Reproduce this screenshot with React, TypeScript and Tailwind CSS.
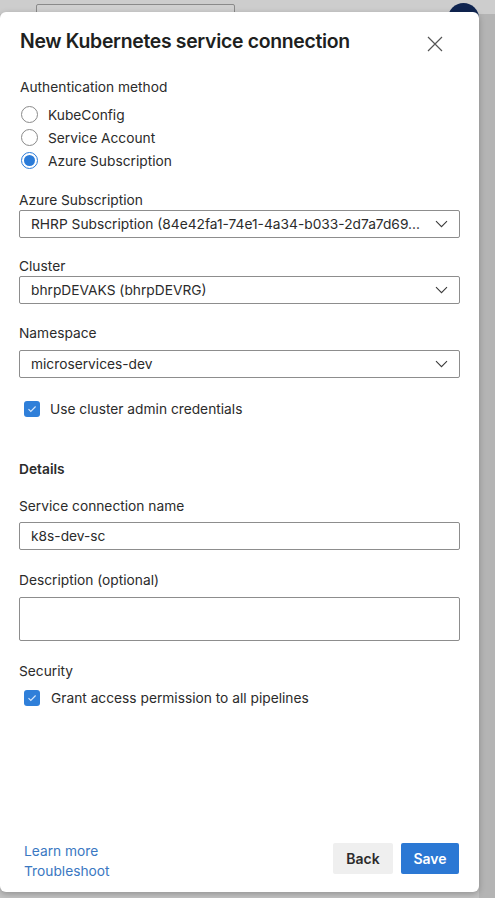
import React from 'react';

const font = { fontFamily: 'Inter, "Liberation Sans", Arial, sans-serif' };

const Chevron = () => (
  <svg width="13" height="8" viewBox="0 0 13 8" fill="none" stroke="#3b3b3b" strokeWidth="1.1">
    <path d="M1 1.2l5.5 5.5L12 1.2" />
  </svg>
);

const Radio = ({ checked, label }: { checked?: boolean; label: string }) => (
  <div className="flex items-center h-[23px]">
    <span
      className={`w-[17px] h-[17px] ml-[21px] rounded-full flex items-center justify-center ${
        checked ? 'border border-[#2b7bd8] bg-white' : 'border border-[#8a8a8a] bg-white'
      }`}
    >
      {checked && <span className="w-[11px] h-[11px] rounded-full bg-[#2b7bd8]" />}
    </span>
    <span className="ml-[10px] text-[13.75px] leading-[20px] text-[#2b2b2b]">{label}</span>
  </div>
);

const Check = () => (
  <span className="w-[16px] h-[16px] rounded-[3px] bg-[#2f7fd9] flex items-center justify-center">
    <svg width="10" height="8" viewBox="0 0 10 8" fill="none" stroke="#d8e8fb" strokeWidth="1.1">
      <path d="M1.5 4.2l2.3 2.3L8.6 1.5" />
    </svg>
  </span>
);

const SelectBox = ({ value, className = '' }: { value: string; className?: string }) => (
  <div className={`mx-[19px] h-[28px] border border-[#8d8d8d] rounded-[2px] flex items-center justify-between pl-[11px] pr-[11px] ${className}`}>
    <span className="text-[13.75px] leading-[20px] text-[#2b2b2b] truncate">{value}</span>
    <Chevron />
  </div>
);

const Label = ({ children, className = '' }: { children: React.ReactNode; className?: string }) => (
  <div className={`px-[19px] text-[13.75px] leading-[20px] text-[#2b2b2b] ${className}`}>{children}</div>
);

export default function App() {
  return (
    <div className="w-[495px] h-[898px] bg-[#c3c3c3] relative overflow-hidden" style={font}>
      {/* page behind the overlay */}
      <div className="absolute left-0 top-0 w-full h-[14px] bg-[#cdcdcd]" />
      <div className="absolute left-[36px] top-[4px] w-[199px] h-[20px] border border-[#8a8a8a] rounded-[2px] bg-[#d0d0d0]" />
      <div className="absolute left-[448px] top-[3px] w-[31px] h-[31px] rounded-full bg-[#0f2450]" />
      <div className="absolute left-[479px] top-[14px] w-[16px] h-[884px] bg-[#b4b4b4]" />

      <div className="absolute left-0 top-[12px] w-[479px] h-[880px] bg-white rounded-[6px] shadow-[0_2px_6px_rgba(0,0,0,0.25)] flex flex-col">
        <div className="flex items-center justify-between pl-[20px] pr-[36px] pt-[17px]">
          <h1 className="text-[19.4px] leading-[24px] font-semibold text-[#201f1e] tracking-[-0.3px]">New Kubernetes service connection</h1>
          <svg width="16" height="16" viewBox="0 0 16 16" stroke="#555" strokeWidth="1.2" className="mt-[6px]">
            <path d="M1 1l14 14M15 1L1 15" />
          </svg>
        </div>

        <Label className="mt-[24px] px-[20px]">Authentication method</Label>
        <div className="mt-[6px]">
          <Radio label="KubeConfig" />
          <Radio label="Service Account" />
          <Radio checked label="Azure Subscription" />
        </div>

        <Label className="mt-[18px]">Azure Subscription</Label>
        <SelectBox value="RHRP Subscription (84e42fa1-74e1-4a34-b033-2d7a7d69..." />

        <Label className="mt-[18px]">Cluster</Label>
        <SelectBox value="bhrpDEVAKS (bhrpDEVRG)" />

        <Label className="mt-[19px]">Namespace</Label>
        <SelectBox value="microservices-dev" className="mt-[7px]" />

        <div className="flex items-center h-[20px] mt-[21px] ml-[24px]">
          <Check />
          <span className="ml-[10px] text-[13.75px] leading-[20px] text-[#2b2b2b]">Use cluster admin credentials</span>
        </div>

        <Label className="mt-[40px] font-semibold">Details</Label>

        <Label className="mt-[17px]">Service connection name</Label>
        <div className="mx-[19px] mt-[6px] h-[28px] border border-[#8d8d8d] rounded-[2px] flex items-center pl-[11px]">
          <span className="text-[13.75px] leading-[20px] text-[#2b2b2b]">k8s-dev-sc</span>
        </div>

        <Label className="mt-[20px]">Description (optional)</Label>
        <div className="mx-[19px] mt-[7px] h-[44px] border border-[#8d8d8d] rounded-[2px]" />

        <Label className="mt-[20px]">Security</Label>
        <div className="flex items-center h-[20px] mt-[7px] ml-[24px]">
          <Check />
          <span className="ml-[11px] text-[13.75px] leading-[20px] text-[#2b2b2b]">Grant access permission to all pipelines</span>
        </div>

        <div className="mt-auto flex items-end justify-between pl-[24px] pr-[20px] pb-[11px]">
          <div className="flex flex-col text-[13.75px] text-[#3a78c2] leading-[20px]">
            <span>Learn more</span>
            <span>Troubleshoot</span>
          </div>
          <div className="flex gap-[8px] mb-[7px]">
            <button className="h-[31px] w-[60px] rounded-[2px] bg-[#efefef] text-[14px] font-semibold text-[#2b2b2b]">Back</button>
            <button className="h-[31px] w-[58px] rounded-[2px] bg-[#2b78d4] text-[14px] font-semibold text-white">Save</button>
          </div>
        </div>
      </div>
    </div>
  );
}
